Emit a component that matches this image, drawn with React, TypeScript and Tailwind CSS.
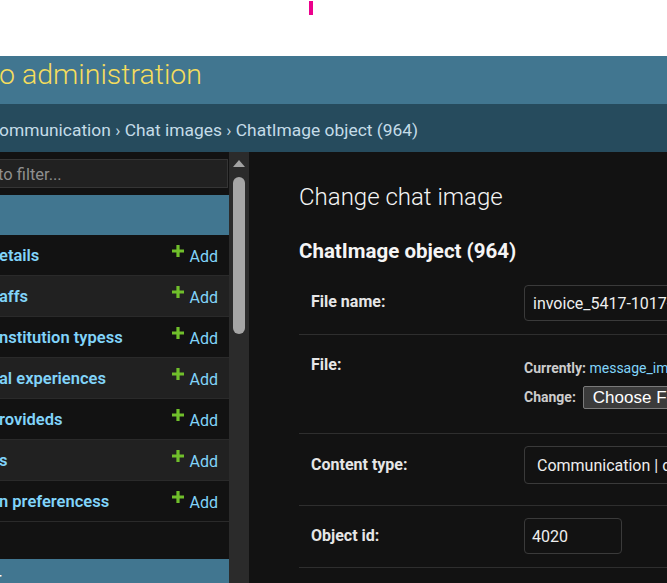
import React from 'react';

const models = [
    'etails',
    'affs',
    'nstitution typess',
    'al experiences',
    'rovideds',
    's',
    'n preferencess',
];

function PlusIcon() {
    return (
        <svg width="12" height="12" viewBox="0 0 12 12" className="shrink-0">
            <path d="M4.4 0h3.2v4.4H12v3.2H7.6V12H4.4V7.6H0V4.4h4.4z" fill="#70bf2b" />
        </svg>
    );
}

function Sidebar() {
    return (
        <div className="w-[229px] shrink-0 pt-[7px]">
            {/* filter box, scrolled off to the left */}
            <div className="h-[29px] -ml-[2px] mr-[1px] border border-[#353535] bg-[#212121] flex items-center pt-[3px] text-[16.5px] text-[#8f8f8f]">
                <span className="-ml-[1px]">to filter...</span>
            </div>

            <div className="mt-[7px] h-[40px] bg-[#417690]" />

            {models.map((name, i) => (
                <div
                    key={name}
                    className={`h-[41px] flex items-center justify-between pr-[11px] border-b border-[#2a2a2a] ${i % 2 === 1 ? 'bg-[#212121]' : 'bg-[#121212]'}`}
                >
                    <span className="-ml-[1px] pt-[3px] text-[16.5px] font-semibold text-[#81d4fa] whitespace-nowrap">{name}</span>
                    <span className="flex items-start gap-[6px] text-[16px] text-[#81d4fa]">
                        <span className="pt-[1px]"><PlusIcon /></span>
                        <span className="leading-[20px] pt-[3px]">Add</span>
                    </span>
                </div>
            ))}

            <div className="h-[37px]" />
            <div className="h-[40px] bg-[#417690] flex items-start pt-[12px]">
                <span className="-ml-[7px] text-[14px] font-semibold text-white">T</span>
            </div>
        </div>
    );
}

function Scrollbar() {
    return (
        <div className="w-[20px] shrink-0 bg-[#2b2b2b] flex flex-col items-center pt-[8px]">
            <svg width="12" height="7" viewBox="0 0 12 7">
                <path d="M6 0L12 7H0z" fill="#a3a3a3" />
            </svg>
            <div className="mt-[10px] w-[12px] h-[157px] rounded-full bg-[#a6a6a6]" />
        </div>
    );
}

function FormRow({ label, height, labelPad, children }: { label: string; height: string; labelPad: string; children: React.ReactNode }) {
    return (
        <div className={`flex border-b border-[#2e2e2e] pl-[12px] pt-[12px] ${height}`}>
            <div className={`w-[213px] shrink-0 text-[16px] leading-[20px] font-bold text-[#e6e6e6] ${labelPad}`}>{label}</div>
            <div className="flex-1 min-w-0">{children}</div>
        </div>
    );
}

export default function App() {
    return (
        <div className="w-[667px] h-[583px] overflow-hidden bg-[#121212] font-['Roboto',sans-serif]">
            <div className="h-[56px] bg-white relative">
                <div className="absolute left-[309px] top-[1px] w-[4px] h-[14px] bg-[#ec008c]" />
            </div>

            <div className="h-[48px] bg-[#417690] flex items-start">
                <span className="-ml-[1px] text-[28.5px] leading-[37px] font-light text-[#f5dd5d] whitespace-nowrap">o administration</span>
            </div>

            <div className="h-[48px] bg-[#264b5d] flex items-center pt-[5px] text-[17.4px] text-[#c4dce8] whitespace-nowrap">
                <span className="-ml-[1px]">ommunication › Chat images › ChatImage object (964)</span>
            </div>

            <div className="flex h-[431px]">
                <Sidebar />
                <Scrollbar />

                <div className="flex-1 min-w-0 pl-[50px] pt-[30px]">
                    <h1 className="text-[24px] leading-[30px] font-light text-[#f5f5f5] whitespace-nowrap">Change chat image</h1>
                    <h2 className="mt-[27px] text-[20.5px] leading-[24px] font-bold text-[#f5f5f5] whitespace-nowrap">ChatImage object (964)</h2>

                    <div className="mt-[10px]">
                        <FormRow label="File name:" height="h-[62px]" labelPad="pt-[7px]">
                            <div className="w-[300px] h-[36px] border border-[#3a3a3a] rounded-[4px] flex items-center pl-[8px] pt-[2px] text-[16px] text-[#eeeeee] whitespace-nowrap">
                                invoice_5417-1017-2024.png
                            </div>
                        </FormRow>

                        <FormRow label="File:" height="h-[99px]" labelPad="pt-[8px]">
                            <div className="pt-[11px] text-[14px] leading-[20px] whitespace-nowrap">
                                <span className="font-bold text-[#cccccc]">Currently:</span>{' '}
                                <span className="text-[#81d4fa]">message_images/invoice_5417.png</span>
                            </div>
                            <div className="mt-[8px] flex items-center gap-[7px] whitespace-nowrap">
                                <span className="text-[14px] font-bold text-[#cccccc]">Change:</span>
                                <span className="h-[23px] flex items-center px-[9px] border border-[#7a7a7a] rounded-[2px] bg-[#3b3b3b] text-[17px] text-white font-['Liberation_Sans',sans-serif]">
                                    Choose File
                                </span>
                            </div>
                        </FormRow>

                        <FormRow label="Content type:" height="h-[72px]" labelPad="pt-[9px]">
                            <div className="w-[300px] h-[38px] border border-[#3a3a3a] rounded-[4px] flex items-center pl-[12px] pt-[1px] text-[16px] text-[#eeeeee] whitespace-nowrap">
                                Communication | chat image
                            </div>
                        </FormRow>

                        <FormRow label="Object id:" height="h-[62px]" labelPad="pt-[8px]">
                            <div className="w-[98px] h-[36px] border border-[#3a3a3a] rounded-[4px] flex items-center pl-[7px] pt-[2px] text-[16px] text-[#eeeeee]">
                                4020
                            </div>
                        </FormRow>
                    </div>
                </div>
            </div>
        </div>
    );
}
